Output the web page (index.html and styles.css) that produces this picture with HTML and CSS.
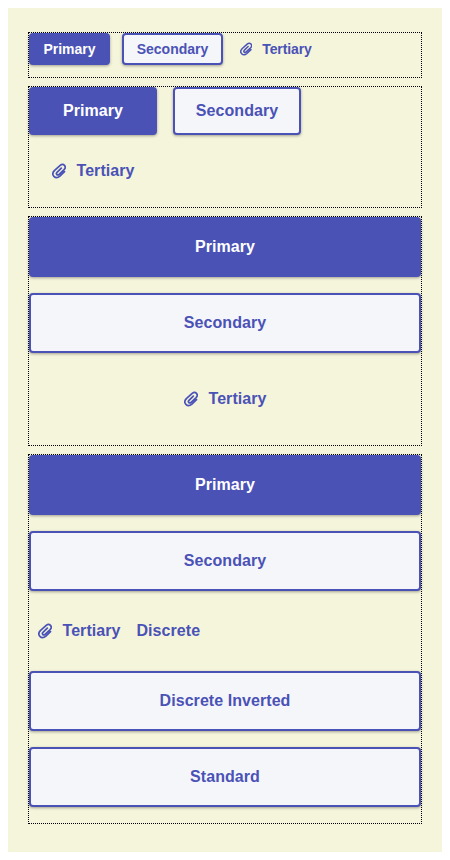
FILE: index.html
```html
<!DOCTYPE html>
<html lang="en">
<head>
<meta charset="utf-8">
<title>Buttons</title>
<link rel="stylesheet" href="styles.css">
</head>
<body>
<svg class="defs" width="0" height="0" aria-hidden="true">
  <symbol id="clip" viewBox="0 0 14 16"><path fill="none" stroke="currentColor" stroke-width="1.7" stroke-linecap="round" d="M9.3 5.2L5 9.3c-1.6 1.7.4 3.6 2.1 2l5-4.7c3-3-.7-6.9-3.9-4.2L2.6 7.4c-4.4 4.4.8 9.6 5.3 5.7l4.6-4.4"/></symbol>
</svg>
<main class="panel">
  <section class="group small">
    <button class="btn primary">Primary</button>
    <button class="btn secondary">Secondary</button>
    <button class="btn tertiary"><svg class="icon"><use href="#clip"/></svg>Tertiary</button>
  </section>
  <section class="group medium">
    <button class="btn primary">Primary</button>
    <button class="btn secondary">Secondary</button>
    <button class="btn tertiary"><svg class="icon"><use href="#clip"/></svg>Tertiary</button>
  </section>
  <section class="group large">
    <button class="btn primary">Primary</button>
    <button class="btn secondary">Secondary</button>
    <button class="btn tertiary"><svg class="icon"><use href="#clip"/></svg>Tertiary</button>
  </section>
  <section class="group large">
    <button class="btn primary">Primary</button>
    <button class="btn secondary">Secondary</button>
    <div class="links">
      <button class="btn tertiary"><svg class="icon"><use href="#clip"/></svg>Tertiary</button>
      <button class="btn tertiary">Discrete</button>
    </div>
    <button class="btn secondary">Discrete Inverted</button>
    <button class="btn secondary">Standard</button>
  </section>
</main>
</body>
</html>
```
FILE: styles.css
```css
* { box-sizing: border-box; }
body { margin: 8px; background: #fff; }
.defs { display: none; }
.panel {
  display: flex;
  flex-direction: column;
  gap: 8px;
  padding: 24px 20px 28px;
  background: #f5f5dc;
}
.group {
  display: flex;
  border: 1px dotted #000;
}
.btn {
  display: flex;
  align-items: center;
  justify-content: center;
  margin: 0;
  padding: 0 12px;
  border: 2px solid #4a52b6;
  border-radius: 4px;
  font: bold 16px/24px "Liberation Sans", Arial, sans-serif;
  letter-spacing: .06px;
  color: #4a52b6;
  box-shadow: 0 1px 3px rgba(0, 0, 0, .35);
}
.primary { background: #4a52b6; color: #fff; }
.secondary { background: #f5f6fa; }
.tertiary { background: none; border-color: transparent; box-shadow: none; }
.icon { width: 14px; height: 16px; margin-right: 11px; }

.small { gap: 12px; padding-bottom: 12px; }
.small .btn { height: 32px; font-size: 14px; letter-spacing: 0; }
.small .primary { width: 81px; }
.small .secondary { width: 101px; }
.small .tertiary { padding: 0 3px; letter-spacing: -.1px; }
.small .icon { width: 12.25px; height: 14px; margin-right: 10px; }

.medium { flex-wrap: wrap; gap: 16px; padding-bottom: 16px; }
.medium .btn { width: 128px; height: 48px; }
.medium .tertiary { height: 40px; }

.large { flex-direction: column; gap: 16px; padding-bottom: 16px; }
.large .btn { height: 60px; }
.links { display: flex; }
.links .btn { height: 48px; padding: 0 5.5px 0 6.5px; }
```
